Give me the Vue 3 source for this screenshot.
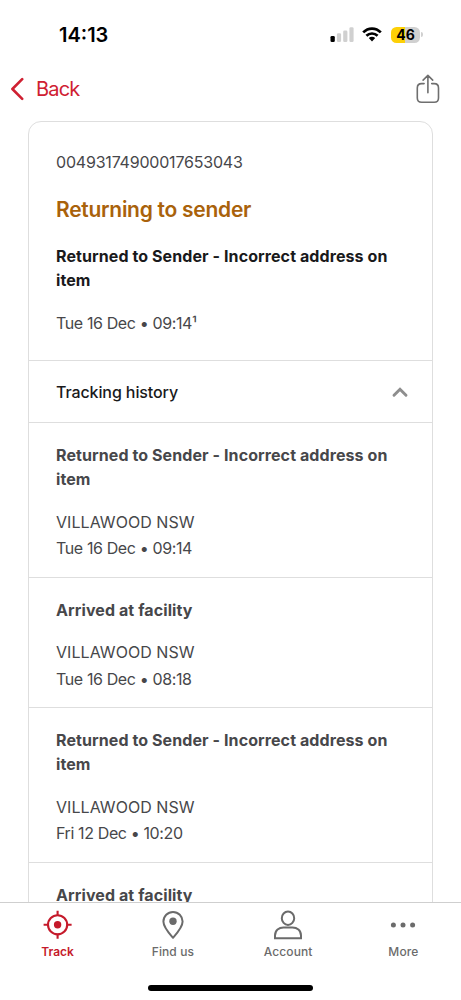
<script setup>
const history = [
  { title: 'Returned to Sender - Incorrect address on item', place: 'VILLAWOOD NSW', time: 'Tue 16 Dec • 09:14' },
  { title: 'Arrived at facility', place: 'VILLAWOOD NSW', time: 'Tue 16 Dec • 08:18' },
  { title: 'Returned to Sender - Incorrect address on item', place: 'VILLAWOOD NSW', time: 'Fri 12 Dec • 10:20' },
  { title: 'Arrived at facility' },
]
</script>

<template>
  <div class="screen">
    <div class="status">
      <span class="clock">14:13</span>
      <div class="indicators">
        <svg class="signal" width="24" height="16" viewBox="0 0 24 16">
          <rect x="0.5" y="9" width="4.3" height="6" rx="1.3" fill="#000" />
          <rect x="6.9" y="6.3" width="4.2" height="8.7" rx="1.3" fill="#d0d0d0" />
          <rect x="13.2" y="3.4" width="4.2" height="11.6" rx="1.3" fill="#d0d0d0" />
          <rect x="19.4" y="0.3" width="4.2" height="14.7" rx="1.3" fill="#d0d0d0" />
        </svg>
        <svg class="wifi" width="20" height="15" viewBox="0 0 20 15">
          <g fill="none" stroke="#000" stroke-width="2.7">
            <path d="M1.2 5.4C6.2 .3 13.8 .3 18.8 5.4" />
            <path d="M4.4 8.8C7.6 5.7 12.4 5.7 15.6 8.8" />
          </g>
          <path d="M6.8 11.1C8.7 9.4 11.3 9.4 13.2 11.1L10 14.4Z" fill="#000" />
        </svg>
        <div class="battery">
          <div class="cell">46</div>
          <div class="cap"></div>
        </div>
      </div>
    </div>

    <header class="navbar">
      <svg width="14" height="24" viewBox="0 0 14 24">
        <path d="M12.2 2.2 2.4 12l9.8 9.8" fill="none" stroke="#cf2032" stroke-width="2.6" stroke-linecap="round" stroke-linejoin="round" />
      </svg>
      <span class="back">Back</span>
      <svg class="share" width="24" height="30" viewBox="0 0 24 30" fill="none" stroke="#6f6f6f" stroke-width="1.6" stroke-linecap="round" stroke-linejoin="round">
        <path d="M8.1 9.6H5.6Q1.3 9.6 1.3 13.9V24Q1.3 28.3 5.6 28.3H18.2Q22.5 28.3 22.5 24V13.9Q22.5 9.6 18.2 9.6H15.7M11.9 18.8V1.7M7.1 6.1l4.8-4.7 4.8 4.7" />
      </svg>
    </header>

    <main class="content">
      <section class="card">
        <div class="summary">
          <div class="number">00493174900017653043</div>
          <h1>Returning to sender</h1>
          <h2>Returned to Sender - Incorrect address on item</h2>
          <div class="meta">Tue 16 Dec • 09:14¹</div>
        </div>
        <div class="toggle">
          <span>Tracking history</span>
          <svg width="18" height="12" viewBox="0 0 18 12">
            <path d="M3 9.3 9 3.2l6 6.1" fill="none" stroke="#8e8e8e" stroke-width="2.9" stroke-linecap="round" stroke-linejoin="miter" />
          </svg>
        </div>
        <article v-for="(e, i) in history" :key="i" class="event">
          <h3>{{ e.title }}</h3>
          <div v-if="e.place" class="place">{{ e.place }}</div>
          <div v-if="e.time" class="meta">{{ e.time }}</div>
        </article>
      </section>
    </main>

    <footer class="tabs">
      <div class="tab active">
        <svg width="30" height="30" viewBox="0 0 30 30">
          <circle cx="14.6" cy="14.8" r="9.6" fill="none" stroke="currentColor" stroke-width="2.1" />
          <circle cx="14.6" cy="14.8" r="3.7" fill="currentColor" />
          <path d="M14.6 .8v5M14.6 23.8v5M.6 14.8h5M23.6 14.8h5" stroke="currentColor" stroke-width="2.1" />
        </svg>
        <span class="track">Track</span>
      </div>
      <div class="tab">
        <svg width="30" height="30" viewBox="0 0 30 30">
          <path d="M15 27.8C11.3 23.6 5.4 17.4 5.4 11.6A9.6 9.6 0 0 1 24.6 11.6C24.6 17.4 18.7 23.6 15 27.8Z" fill="none" stroke="currentColor" stroke-width="2" stroke-linejoin="round" />
          <circle cx="15" cy="11.3" r="3.7" fill="currentColor" />
        </svg>
        <span>Find us</span>
      </div>
      <div class="tab">
        <svg width="30" height="30" viewBox="0 0 30 30" fill="none" stroke="currentColor" stroke-width="2">
          <ellipse cx="15" cy="8.2" rx="6.2" ry="6.7" />
          <path d="M2 28.2V25.4C2 20.2 6 17.5 10.5 17.5H19.5C24 17.5 28 20.2 28 25.4V28.2Z" />
        </svg>
        <span>Account</span>
      </div>
      <div class="tab">
        <svg width="30" height="30" viewBox="0 0 30 30" fill="currentColor">
          <circle cx="5.4" cy="15" r="2.5" />
          <circle cx="15" cy="15" r="2.5" />
          <circle cx="24.6" cy="15" r="2.5" />
        </svg>
        <span>More</span>
      </div>
      <div class="home"></div>
    </footer>
  </div>
</template>

<style>
body {
  margin: 0;
  background: #fff;
}
</style>

<style scoped>
.screen {
  width: 461px;
  height: 1000px;
  display: flex;
  flex-direction: column;
  overflow: hidden;
  background: #fff;
  color: #47474a;
  font-family: Inter, "Liberation Sans", sans-serif;
  font-size: 16px;
}
.status {
  height: 69px;
  display: flex;
  align-items: center;
  justify-content: space-between;
  padding: 0 38px 0 59px;
  box-sizing: border-box;
  flex: none;
}
.clock {
  color: #000;
  font-size: 20px;
  font-weight: 600;
  letter-spacing: 0;
}
.indicators {
  display: flex;
  align-items: center;
}
.wifi {
  margin-left: 8px;
}
.battery {
  display: flex;
  align-items: center;
  margin-left: 9px;
}
.cell {
  width: 29px;
  height: 16px;
  border-radius: 5.5px;
  background: linear-gradient(90deg, #fdd007 0 14px, #d0d0d0 14px);
  color: #000;
  font-size: 14px;
  font-weight: 700;
  line-height: 16px;
  text-align: center;
}
.cap {
  width: 2px;
  height: 5px;
  margin-left: 1px;
  border-radius: 0 2px 2px 0;
  background: #d0d0d0;
}
.navbar {
  height: 40px;
  flex: none;
  display: flex;
  align-items: center;
  padding: 0 21px 0 10px;
}
.back {
  margin-left: 12px;
  color: #cf2032;
  font-size: 20px;
  letter-spacing: -0.8px;
}
.share {
  margin-left: auto;
}
.content {
  flex: 1;
  min-height: 0;
  overflow: hidden;
  padding: 12px 28px 0;
}
.card {
  border: 1px solid #dedede;
  border-radius: 13px 13px 0 0;
}
.summary {
  height: 238px;
  box-sizing: border-box;
  padding: 28px 27px 0;
}
.number {
  line-height: 24px;
  letter-spacing: -0.2px;
}
h1,
h2,
h3 {
  margin: 0;
}
h1 {
  margin-top: 21px;
  color: #a9620b;
  font-size: 21px;
  font-weight: 600;
  line-height: 30px;
  letter-spacing: -0.27px;
}
h2,
h3 {
  font-size: 16px;
  font-weight: 700;
  line-height: 24px;
  letter-spacing: 0.09px;
}
h2 {
  margin-top: 19px;
  color: #19191b;
}
.summary .meta {
  margin-top: 18px;
}
.toggle {
  height: 62px;
  box-sizing: border-box;
  border-top: 1px solid #dedede;
  padding: 0 23px 0 27px;
  display: flex;
  align-items: center;
  justify-content: space-between;
  color: #19191b;
  font-weight: 500;
  letter-spacing: -0.1px;
}
.event {
  border-top: 1px solid #dedede;
  padding: 20px 27px 15px;
}
.place {
  margin-top: 17.5px;
  letter-spacing: 0.05px;
}
.place,
.meta {
  line-height: 26.5px;
}
.meta {
  letter-spacing: -0.38px;
}
.tabs {
  position: relative;
  flex: none;
  height: 97px;
  border-top: 1px solid #cfcfcf;
  display: flex;
}
.tab {
  flex: 1;
  height: 60px;
  padding-top: 7px;
  display: flex;
  flex-direction: column;
  align-items: center;
  color: #6b6b6b;
  font-size: 12px;
  font-weight: 500;
  line-height: 16px;
  letter-spacing: 0.1px;
}
.tab span {
  margin-top: 4px;
}
.active {
  color: #c51a2b;
}
.track {
  font-weight: 600;
  letter-spacing: 0;
}
.home {
  position: absolute;
  left: 148px;
  bottom: 9px;
  width: 165px;
  height: 6px;
  border-radius: 3px;
  background: #000;
}
</style>
